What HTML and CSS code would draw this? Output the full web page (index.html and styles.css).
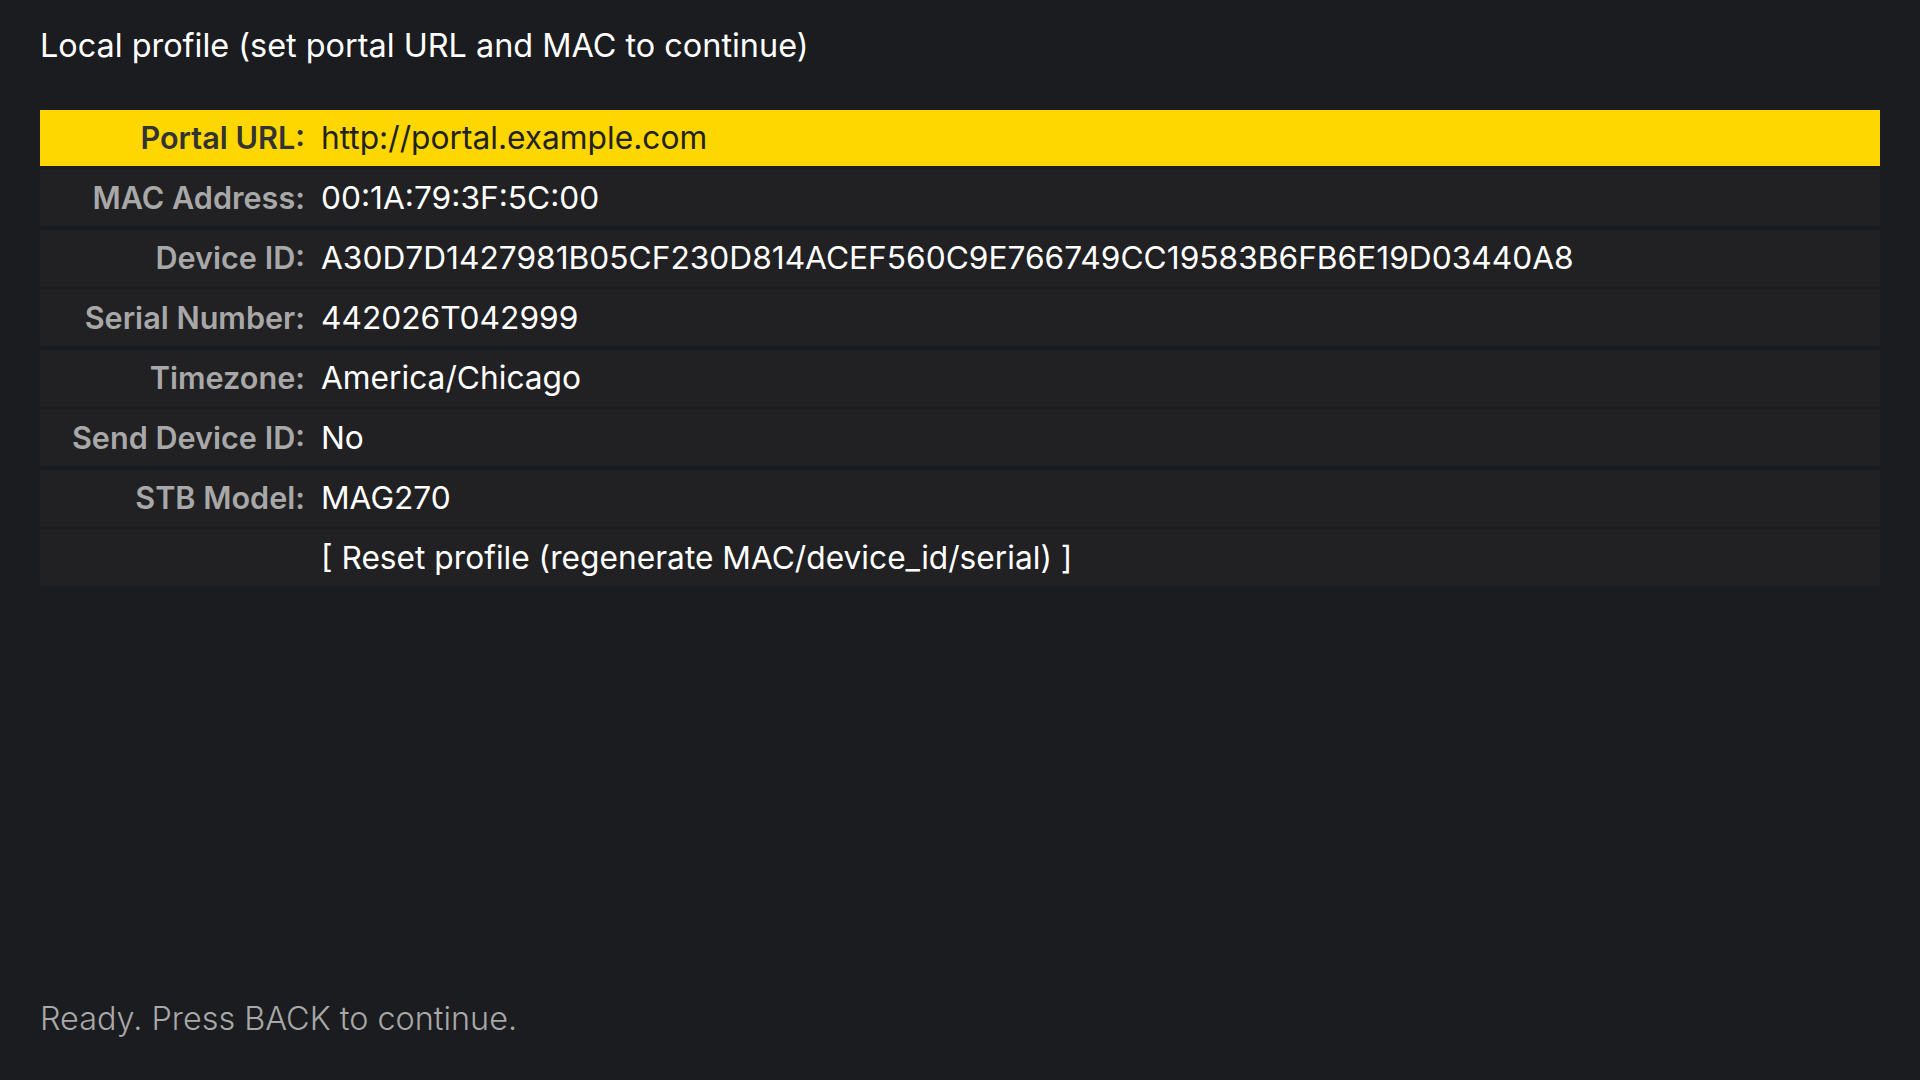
FILE: index.html
```html
<!DOCTYPE html>
<html lang="en">
<head>
  <meta charset="UTF-8">
  <title>Local profile</title>
  <link rel="stylesheet" href="styles.css">
</head>
<body>
  <div id="screen">
    <div class="title">Local profile (set portal URL and MAC to continue)</div>

    <div class="list">
      <div class="row focused">
        <div class="label">Portal URL:</div>
        <div class="value">http://portal.example.com</div>
      </div>
      <div class="row">
        <div class="label">MAC Address:</div>
        <div class="value">00:1A:79:3F:5C:00</div>
      </div>
      <div class="row">
        <div class="label">Device ID:</div>
        <div class="value">A30D7D1427981B05CF230D814ACEF560C9E766749CC19583B6FB6E19D03440A8</div>
      </div>
      <div class="row">
        <div class="label">Serial Number:</div>
        <div class="value">442026T042999</div>
      </div>
      <div class="row">
        <div class="label">Timezone:</div>
        <div class="value">America/Chicago</div>
      </div>
      <div class="row">
        <div class="label">Send Device ID:</div>
        <div class="value">No</div>
      </div>
      <div class="row">
        <div class="label">STB Model:</div>
        <div class="value">MAG270</div>
      </div>
      <div class="row">
        <div class="label"></div>
        <div class="value">[ Reset profile (regenerate MAC/device_id/serial) ]</div>
      </div>
    </div>

    <div class="status">Ready. Press BACK to continue.</div>
  </div>
</body>
</html>
```

FILE: styles.css
```css
html, body {
  margin: 0;
  padding: 0;
  background: #1b1c1f;
  color: #fff;
  font-family: Inter, "Noto Sans", sans-serif;
  overflow: hidden;
}

#screen {
  display: flex;
  flex-direction: column;
  height: 100vh;
  box-sizing: border-box;
  padding: 24px 40px 42px 40px;
}

.title {
  font-size: 32.4px;
  line-height: 44px;
}

.list {
  display: flex;
  flex-direction: column;
  gap: 4px;
  margin-top: 42px;
}

.row {
  display: flex;
  align-items: center;
  gap: 16px;
  height: 56px;
  padding-bottom: 2px;
  box-sizing: border-box;
  background: #212123;
  font-size: 31.7px;
}

.label {
  width: 265px;
  text-align: right;
  font-size: 30.6px;
  font-weight: 600;
  color: #a8a8a8;
  flex-shrink: 0;
}

.value {
  color: #fff;
}

.row.focused {
  background: #ffd700;
}

.row.focused .label {
  color: #333;
}

.row.focused .value {
  color: #222;
}

.status {
  margin-top: auto;
  font-size: 32.4px;
  font-weight: 300;
  color: #a8a8a8;
}
```
